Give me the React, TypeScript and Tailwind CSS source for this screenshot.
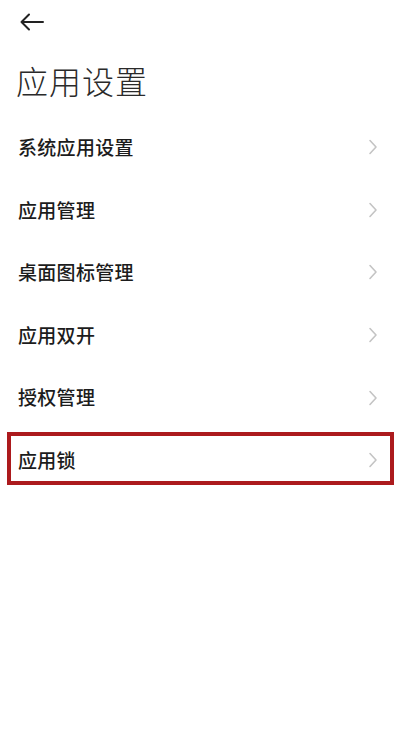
import React from "react";

const items = ["系统应用设置", "应用管理", "桌面图标管理", "应用双开", "授权管理", "应用锁"];

function Chevron() {
  return (
    <svg width="10" height="16" viewBox="0 0 10 16" fill="none">
      <path d="M2 1.5 L8 8 L2 14.5" stroke="#c4c4c4" strokeWidth="1.6" strokeLinecap="round" strokeLinejoin="round" />
    </svg>
  );
}

export default function App() {
  return (
    <div
      className="w-[400px] h-[749px] bg-white overflow-hidden"
      style={{ fontFamily: '"Noto Sans CJK SC", "Noto Sans", sans-serif' }}
    >
      <div className="h-[44px] pl-[19px] pt-[11px]">
        <svg width="25" height="22" viewBox="0 0 25 22" fill="none">
          <path d="M24 11 H2.5 M10 3.5 L2.5 11 L10 18.5" stroke="#222" strokeWidth="2" strokeLinecap="round" strokeLinejoin="round" />
        </svg>
      </div>
      <div className="h-[72px] pl-[16px] pt-[16px] text-[32px] leading-[40px] font-light text-[#2a2a2a] tracking-[1px]">
        应用设置
      </div>
      <div className="flex flex-col">
        {items.map((t, i) => (
          <div key={t} className="relative h-[62.6px] flex items-center justify-between pl-[18px] pr-[22px]">
            <span className="text-[19px] font-medium text-[#1c1c1c] tracking-[0.3px]">{t}</span>
            <Chevron />
            {i === 5 && (
              <div className="absolute left-[7px] right-[6px] top-[3px] h-[53px] border-[4px] border-[#ac1a1d]" />
            )}
          </div>
        ))}
      </div>
    </div>
  );
}
